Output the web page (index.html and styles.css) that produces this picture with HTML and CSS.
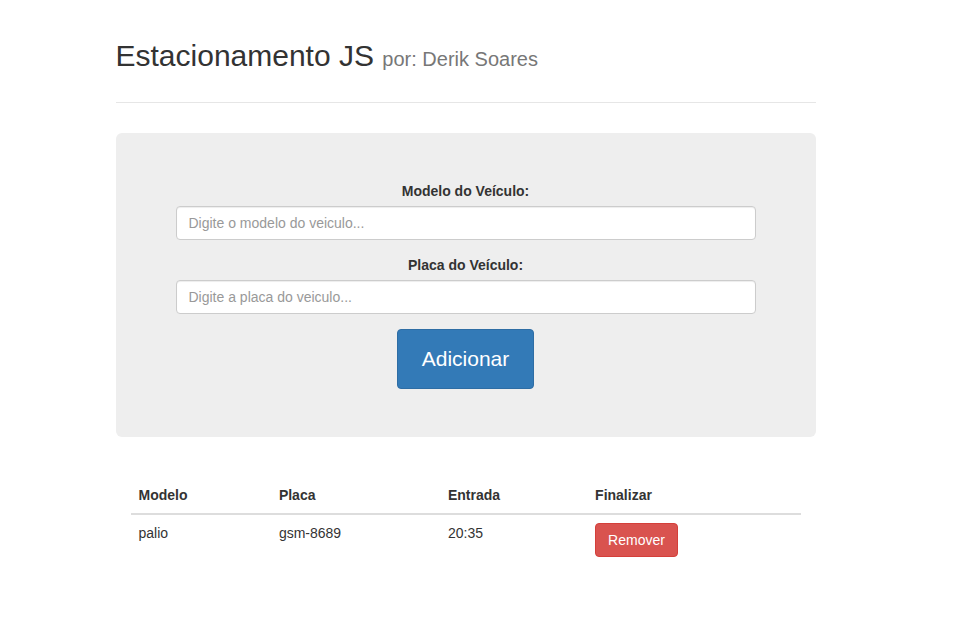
FILE: index.html
```html
<!DOCTYPE html>
<html lang="pt-BR">
<head>
<meta charset="utf-8">
<title>Estacionamento JS</title>
<link rel="stylesheet" href="styles.css">
</head>
<body>
<main class="container">
  <header class="page-header">
    <h1>Estacionamento JS <small>por: Derik Soares</small></h1>
  </header>
  <form class="jumbotron">
    <div class="form-group">
      <label for="modelo">Modelo do Veículo:</label>
      <input class="form-control" type="text" id="modelo" placeholder="Digite o modelo do veiculo...">
    </div>
    <div class="form-group">
      <label for="placa">Placa do Veículo:</label>
      <input class="form-control" type="text" id="placa" placeholder="Digite a placa do veiculo...">
    </div>
    <button class="btn btn-primary" type="button">Adicionar</button>
  </form>
  <section class="results">
    <table class="table">
      <thead>
        <tr><th scope="col">Modelo</th><th scope="col">Placa</th><th scope="col">Entrada</th><th scope="col">Finalizar</th></tr>
      </thead>
      <tbody>
        <tr><td>palio</td><td>gsm-8689</td><td>20:35</td><td><button class="btn btn-danger" type="button">Remover</button></td></tr>
      </tbody>
    </table>
  </section>
</main>
</body>
</html>
```
FILE: styles.css
```css
* {
  box-sizing: border-box;
}

body {
  margin: 0;
  padding-right: 38px;
  font-family: "Liberation Sans", Arial, sans-serif;
  font-size: 14px;
  line-height: 20px;
  color: #333;
  background: #fff;
}

.container {
  max-width: 730px;
  margin: 0 auto;
  padding: 0 15px;
}

.page-header {
  margin: 38px 0 30px;
  padding-bottom: 29px;
  border-bottom: 1px solid #e6e6e6;
}

h1 {
  margin: 0;
  font-size: 30px;
  font-weight: 400;
  line-height: 35px;
}

h1 small {
  font-size: 20px;
  line-height: 20px;
  color: #777;
}

.jumbotron {
  margin-bottom: 30px;
  padding: 48px 60px;
  border-radius: 6px;
  background: #eee;
  text-align: center;
}

.form-group {
  margin-bottom: 15px;
}

label {
  display: block;
  margin-bottom: 5px;
  font-weight: 700;
}

.form-control {
  display: block;
  width: 100%;
  height: 34px;
  padding: 6px 12px;
  border: 1px solid #ccc;
  border-radius: 4px;
  background: #fff;
  box-shadow: inset 0 1px 1px rgba(0, 0, 0, 0.075);
  font: inherit;
  color: #555;
}

.form-control::placeholder {
  color: #999;
  opacity: 1;
}

.btn {
  border: 1px solid transparent;
  border-radius: 4px;
  padding: 6px 12px;
  font: inherit;
  color: #fff;
  cursor: pointer;
}

.btn-primary {
  display: block;
  margin: 0 auto;
  padding: 14px 24px;
  border-color: #2e6da4;
  background: #337ab7;
  font-size: 21px;
  line-height: 30px;
}

.btn-danger {
  border-color: #d43f3a;
  background: #d9534f;
}

.results {
  padding: 10px 15px;
}

.table {
  width: 100%;
  border-collapse: collapse;
}

th,
td {
  padding: 8px;
  text-align: left;
  vertical-align: top;
}

th {
  border-bottom: 2px solid #ddd;
}
```
